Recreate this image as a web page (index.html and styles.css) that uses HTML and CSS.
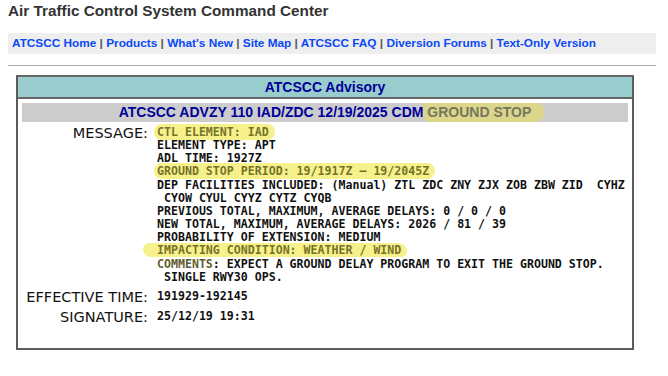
FILE: index.html
```html
<!DOCTYPE html>
<html lang="en">
<head>
  <meta charset="UTF-8" />
  <title>ATCSCC Advisory</title>
  <link rel="stylesheet" href="styles.css">
</head>
<body>
  <h1>Air Traffic Control System Command Center</h1>

  <div class="nav">
    <a href="#">ATCSCC Home</a> |
    <a href="#">Products</a> |
    <a href="#">What's New</a> |
    <a href="#">Site Map</a> |
    <a href="#">ATCSCC FAQ</a> |
    <a href="#">Diversion Forums</a> |
    <a href="#">Text-Only Version</a>
  </div>

  <hr class="rule">

  <div class="advisory">
    <div class="advisory-head">ATCSCC Advisory</div>
    <div class="advisory-body">
      <div class="subject">ATCSCC ADVZY 110 IAD/ZDC 12/19/2025 CDM <span class="mark mark-gray">GROUND STOP</span></div>

      <div class="fields">
        <div class="label">MESSAGE:</div>
        <div class="value"><span class="mark">CTL ELEMENT: IAD</span>
ELEMENT TYPE: APT
ADL TIME: 1927Z
<span class="mark">GROUND STOP PERIOD: 19/1917Z – 19/2045Z</span>
DEP FACILITIES INCLUDED: (Manual) ZTL ZDC ZNY ZJX ZOB ZBW ZID  CYHZ
 CYOW CYUL CYYZ CYTZ CYQB
PREVIOUS TOTAL, MAXIMUM, AVERAGE DELAYS: 0 / 0 / 0
NEW TOTAL, MAXIMUM, AVERAGE DELAYS: 2026 / 81 / 39
PROBABILITY OF EXTENSION: MEDIUM
<span class="mark mark-wide">IMPACTING CONDITION: WEATHER / WIND</span>
<span class="faded">COMMENTS</span>: EXPECT A GROUND DELAY PROGRAM TO EXIT THE GROUND STOP.
 SINGLE RWY30 OPS.</div>

        <div class="label">EFFECTIVE TIME:</div>
        <div class="value">191929-192145</div>

        <div class="label">SIGNATURE:</div>
        <div class="value">25/12/19 19:31</div>
      </div>
    </div>
  </div>
</body>
</html>
```

FILE: styles.css
```css
body {
  margin: 0 12px 0 8px;
  font-family: "Liberation Sans", Arial, sans-serif;
  background: #fff;
  color: #000;
}

h1 {
  margin: 0;
  padding-top: 1px;
  font-size: 15.3px;
  line-height: 20px;
  color: #333;
}

.nav {
  margin-top: 12px;
  background: #eeeeee;
  padding: 3px 4px;
  font-size: 11.8px;
  line-height: 15px;
  font-weight: bold;
  color: #555;
}

.nav a {
  color: #0a48f5;
  text-decoration: none;
}

.rule {
  margin: 11px 0 0;
  border: none;
  border-top: 1px solid #aaa;
}

.advisory {
  margin: 9px 22px 0 8px;
  border: 2px solid #5c5c5c;
  border-top-color: #666;
}

.advisory-head {
  background: #99cccc;
  border-bottom: 2px solid #666;
  text-align: center;
  font-size: 14px;
  line-height: 20px;
  font-weight: bold;
  color: #000099;
}

.advisory-body {
  padding: 4px 4px 24px;
}

.subject {
  background: #cccccc;
  text-align: center;
  font-size: 14px;
  line-height: 19px;
  font-weight: bold;
  color: #000099;
}

.fields {
  display: grid;
  grid-template-columns: 126px 1fr;
  column-gap: 9px;
  row-gap: 6px;
  margin-top: 4px;
}

.label {
  text-align: right;
  font-family: "DejaVu Sans", Verdana, sans-serif;
  font-size: 14.5px;
  line-height: 13px;
  padding-top: 1px;
  color: #111;
}

.value {
  font-family: "DejaVu Sans Mono", Menlo, monospace;
  font-size: 11.6px;
  line-height: 13.15px;
  font-weight: bold;
  white-space: pre;
  color: #111;
}

.mark {
  background: rgba(244, 236, 100, 0.75);
  color: #76732a;
  border-radius: 8px;
  padding: 1px 6px 1px 3px;
  margin: 0 -6px 0 -3px;
}

.mark-gray {
  background: #dcd68a;
  color: #77775e;
  padding: 1px 14px 2px 4px;
  margin: 0 -14px 0 -4px;
  border-radius: 4px 12px 14px 10px;
}

.mark-wide {
  padding: 0 6px 0 14px;
  margin-left: -14px;
  border-radius: 10px 14px 8px 12px;
}

.faded {
  color: #5e5c2c;
}
```
